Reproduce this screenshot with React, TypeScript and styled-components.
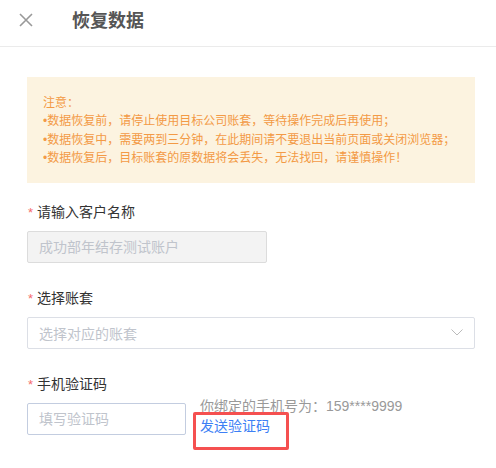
import React from 'react';
import styled, { createGlobalStyle } from 'styled-components';

const GlobalStyle = createGlobalStyle`
  body {
    margin: 0;
    background: #fff;
    font-family: "Liberation Sans", "Noto Sans CJK SC", sans-serif;
  }
`;

const SPage = styled.div`
  width: 496px;
  height: 468px;
  overflow: hidden;
`;

const SHeader = styled.div`
  display: flex;
  align-items: center;
  padding: 0 0 0 19px;
  border-bottom: 1px solid #ebebeb;
  box-sizing: border-box;
  height: 47px;
`;

const SClose = styled.button`
  display: flex;
  padding: 0;
  border: none;
  background: none;
  width: 14px;
  height: 14px;
  margin: -7px 39px 0 0;
  cursor: pointer;
`;

const STitle = styled.h1`
  margin: -8px 0 0;
  font-size: 18px;
  font-weight: bold;
  color: #555;
`;

const SBody = styled.div`
  padding: 30px 21px 0 27px;
`;

const SNotice = styled.div`
  background: #fcf3e0;
  padding: 17px 16px 15px;
  font-size: 12px;
  line-height: 18.4px;
  color: #f39a45;
`;

const SField = styled.div<{ $first?: boolean }>`
  margin-top: ${(p) => (p.$first ? '18px' : '24px')};
`;

const SLabel = styled.div`
  display: flex;
  align-items: center;
  font-size: 14px;
  line-height: 20px;
  color: #333;
  margin-bottom: 8px;

  &::before {
    content: '*';
    color: #f56c6c;
    font-size: 13px;
    margin: 2px 4px 0 1px;
  }
`;

const SInput = styled.input<{ $width?: string; $tone?: string }>`
  display: block;
  box-sizing: border-box;
  width: ${(p) => p.$width || '100%'};
  height: 32px;
  padding: 0 11px;
  border: 1px solid ${(p) => p.$tone || '#dcdfe6'};
  border-radius: 2px;
  background: #fff;
  font-size: 14px;
  font-family: inherit;
  color: #333;
  outline: none;

  &::placeholder {
    color: #c0c4cc;
  }

  &:disabled {
    background: #f3f3f3;
    border-color: #dcdcdc;
  }
`;

const SSelect = styled.div`
  box-sizing: border-box;
  display: flex;
  align-items: center;
  justify-content: space-between;
  height: 32px;
  padding: 0 11px;
  border: 1px solid #dcdfe6;
  border-radius: 2px;
  font-size: 14px;
  color: #c0c4cc;
`;

const SRow = styled.div`
  display: flex;
  align-items: flex-start;
  gap: 14px;
`;

const SSide = styled.div`
  display: flex;
  flex-direction: column;
  align-items: flex-start;
  margin-top: -7px;
  font-size: 14px;
  line-height: 20px;
`;

const SPhone = styled.div`
  color: #999;
`;

const SLinkWrap = styled.div`
  position: relative;
`;

const SLink = styled.a`
  color: #3d7ff5;
  text-decoration: none;
  cursor: pointer;
`;

const SMark = styled.div`
  position: absolute;
  left: -7px;
  top: -4px;
  width: 96px;
  height: 38px;
  box-sizing: border-box;
  border: 3px solid #f55050;
  border-radius: 2px;
  pointer-events: none;
`;

const App = () => {
  return (
    <SPage>
      <GlobalStyle />
      <SHeader>
        <SClose aria-label="关闭">
          <svg width="14" height="14" viewBox="0 0 14 14">
            <path d="M1 1 L13 13 M13 1 L1 13" stroke="#999" strokeWidth="1.6" fill="none" />
          </svg>
        </SClose>
        <STitle>恢复数据</STitle>
      </SHeader>
      <SBody>
        <SNotice>
          <div>注意：</div>
          <div>•数据恢复前，请停止使用目标公司账套，等待操作完成后再使用；</div>
          <div>•数据恢复中，需要两到三分钟，在此期间请不要退出当前页面或关闭浏览器；</div>
          <div>•数据恢复后，目标账套的原数据将会丢失，无法找回，请谨慎操作！</div>
        </SNotice>

        <SField $first>
          <SLabel>请输入客户名称</SLabel>
          <SInput $width="240px" disabled placeholder="成功部年结存测试账户" />
        </SField>

        <SField>
          <SLabel>选择账套</SLabel>
          <SSelect>
            <span>选择对应的账套</span>
            <svg width="12" height="7" viewBox="0 0 12 7">
              <path d="M0.5 0.5 L6 6 L11.5 0.5" stroke="#bbb" strokeWidth="1" fill="none" />
            </svg>
          </SSelect>
        </SField>

        <SField>
          <SLabel>手机验证码</SLabel>
          <SRow>
            <SInput $width="159px" $tone="#c3cde0" placeholder="填写验证码" />
            <SSide>
              <SPhone>你绑定的手机号为：159****9999</SPhone>
              <SLinkWrap>
                <SLink>发送验证码</SLink>
                <SMark />
              </SLinkWrap>
            </SSide>
          </SRow>
        </SField>
      </SBody>
    </SPage>
  );
};

export default App;
